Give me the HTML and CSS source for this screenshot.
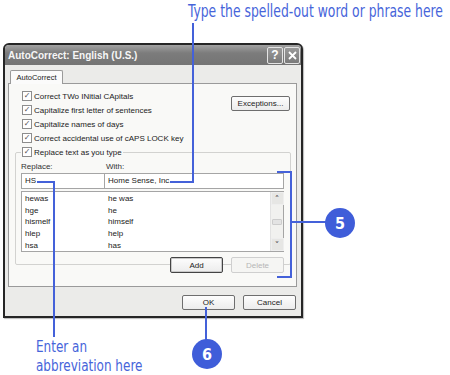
FILE: index.html
```html
<!DOCTYPE html>
<html lang="en">
<head>
  <meta charset="UTF-8" />
  <title>AutoCorrect</title>
  <link rel="stylesheet" href="styles.css">
</head>
<body>
<div class="page">
  <div class="dialog">
    <div class="titlebar">
      <span class="title">AutoCorrect: English (U.S.)</span>
      <div class="title-btns">
        <span class="tbtn">?</span>
        <span class="tbtn">
          <svg width="11" height="11" viewBox="0 0 11 11"><path d="M2 2 L9 9 M9 2 L2 9" stroke="#fff" stroke-width="1.8"/></svg>
        </span>
      </div>
    </div>

    <div class="dlg-body">
      <div class="tabs">
        <div class="tab">AutoCorrect</div>
      </div>
      <div class="panel">
        <div class="top-opts">
          <div class="checks">
            <label class="chk"><span class="box">&#10003;</span>Correct TWo INitial CApitals</label>
            <label class="chk"><span class="box">&#10003;</span>Capitalize first letter of sentences</label>
            <label class="chk"><span class="box">&#10003;</span>Capitalize names of days</label>
            <label class="chk"><span class="box">&#10003;</span>Correct accidental use of cAPS LOCK key</label>
          </div>
          <button class="btn exc">Exceptions...</button>
        </div>

        <fieldset class="group">
          <legend><label class="chk"><span class="box">&#10003;</span>Replace text as you type</label></legend>
          <div class="heads">
            <span class="h-rep">Replace:</span>
            <span>With:</span>
          </div>
          <div class="inputs">
            <div class="inp rep">HS</div>
            <div class="inp with">Home Sense, Inc.</div>
          </div>
          <div class="list">
            <div class="rows">
              <div class="row"><span class="c1">hewas</span><span>he was</span></div>
              <div class="row"><span class="c1">hge</span><span>he</span></div>
              <div class="row"><span class="c1">hismelf</span><span>himself</span></div>
              <div class="row"><span class="c1">hlep</span><span>help</span></div>
              <div class="row"><span class="c1">hsa</span><span>has</span></div>
            </div>
            <div class="scroll">
              <span class="arrow">&#708;</span>
              <span class="thumb"></span>
              <span class="arrow">&#709;</span>
            </div>
          </div>
          <div class="grp-btns">
            <button class="btn add">Add</button>
            <button class="btn dis">Delete</button>
          </div>
        </fieldset>
      </div>

      <div class="foot-btns">
        <button class="btn">OK</button>
        <button class="btn">Cancel</button>
      </div>
    </div>
  </div>

  <!-- callouts -->
  <div class="note note-top">Type the spelled-out word or phrase here</div>
  <div class="ln" style="left:192px; top:23px; width:2px; height:160px;"></div>
  <div class="ln" style="left:170px; top:181px; width:24px; height:2px;"></div>

  <div class="ln" style="left:37px; top:181px; width:18px; height:2px;"></div>
  <div class="ln" style="left:53px; top:181px; width:2px; height:156px;"></div>
  <div class="note note-abbr">Enter an<br>abbreviation here</div>

  <div class="ln" style="left:277px; top:171px; width:15px; height:2px;"></div>
  <div class="ln" style="left:290px; top:171px; width:2px; height:107px;"></div>
  <div class="ln" style="left:277px; top:276px; width:15px; height:2px;"></div>
  <div class="ln" style="left:290px; top:221px; width:36px; height:2px;"></div>
  <div class="bubble" style="left:325px; top:208px;">5</div>

  <div class="ln" style="left:205px; top:307px; width:2px; height:34px;"></div>
  <div class="bubble" style="left:192px; top:339px;">6</div>
</div>
</body>
</html>
```

FILE: styles.css
```css
body {
  margin: 0;
  background: #fff;
  font-family: 'Liberation Sans', Arial, sans-serif;
}

.page {
  position: relative;
  width: 450px;
  height: 375px;
  overflow: hidden;
}

.dialog {
  margin: 43px 0 0 3px;
  width: 296px;
  height: 271px;
  border: 2px solid #262626;
  border-radius: 6px 6px 0 0;
  background: #ebebe9;
  display: flex;
  flex-direction: column;
  box-shadow: 1px 1px 1px #bbb;
}

.titlebar {
  height: 20px;
  display: flex;
  align-items: center;
  justify-content: space-between;
  padding: 0 1px 0 3px;
  background: linear-gradient(#a2a2a2, #7c7c7c 40%, #747474);
  border-radius: 4px 4px 0 0;
}

.title {
  color: #f6f6f6;
  font-size: 10px;
  font-weight: bold;
}

.title-btns {
  display: flex;
  gap: 1px;
}

.tbtn {
  width: 14px;
  height: 15px;
  border: 1px solid #e4e4e4;
  border-radius: 2px;
  background: linear-gradient(#9a9a9a, #7a7a7a);
  color: #fff;
  font-size: 12px;
  font-weight: bold;
  display: flex;
  align-items: center;
  justify-content: center;
}

.dlg-body {
  flex: 1;
  padding: 5px 4px 0 3px;
  font-size: 8px;
  color: #222;
}

.tabs {
  display: flex;
  padding-left: 2px;
}

.tab {
  width: 51px;
  height: 13px;
  border: 1px solid #9a9a9a;
  border-bottom: none;
  border-radius: 2px 2px 0 0;
  background: #fbfbfb;
  font-size: 7.5px;
  text-align: center;
  line-height: 13px;
  margin-bottom: -1px;
  position: relative;
}

.panel {
  height: 197px;
  border: 1px solid #9a9a9a;
  background: #f9f9f7;
  padding-top: 5px;
  box-sizing: content-box;
}

.top-opts {
  display: flex;
  justify-content: space-between;
  padding: 0 6px 0 13px;
}

.chk {
  display: flex;
  align-items: center;
  gap: 2px;
  height: 14px;
  white-space: nowrap;
}

.box {
  width: 8px;
  height: 8px;
  border: 1px solid #8d8d8d;
  background: #fff;
  color: #555;
  font-size: 8px;
  line-height: 8px;
  text-align: center;
  font-family: 'DejaVu Sans', sans-serif;
}

.btn {
  font-family: 'Liberation Sans', Arial, sans-serif;
  font-size: 8px;
  color: #222;
  height: 15px;
  padding: 0;
  border: 1px solid #6e6e6e;
  border-radius: 2px;
  background: linear-gradient(#fdfdfd, #ececec);
}

.exc {
  width: 59px;
  margin-top: 7px;
}

.group {
  margin: 0 5px 0 6px;
  padding: 0 6px 3px 5px;
  border: 1px solid #d2d2d0;
  border-radius: 2px;
  height: 120px;
  box-sizing: border-box;
}

.group legend {
  padding: 0 1px;
}

.heads {
  display: flex;
  height: 10px;
  align-items: center;
  margin-top: 2px;
  color: #333;
}

.h-rep {
  width: 85px;
}

.inputs {
  display: flex;
  margin-top: 2px;
}

.inp {
  height: 14px;
  border: 1px solid #a5a5a5;
  background: #fff;
  line-height: 14px;
  padding-left: 3px;
  box-sizing: content-box;
}

.rep {
  width: 79px;
}

.with {
  flex: 1;
  border-left: none;
}

.list {
  margin-top: 2px;
  height: 59px;
  border: 1px solid #a5a5a5;
  background: #fff;
  display: flex;
}

.rows {
  flex: 1;
  padding-top: 1px;
}

.row {
  display: flex;
  height: 11.6px;
  align-items: center;
  padding-left: 3px;
}

.c1 {
  width: 83px;
}

.scroll {
  width: 12px;
  border-left: 1px solid #e2e2e2;
  background: #f1f1ef;
  display: flex;
  flex-direction: column;
  justify-content: space-between;
  align-items: center;
}

.arrow {
  width: 11px;
  height: 11px;
  background: #e6e6e4;
  border: 1px solid #eee;
  color: #666;
  font-size: 9px;
  font-weight: bold;
  text-align: center;
  line-height: 13px;
  font-family: 'DejaVu Sans', sans-serif;
}

.thumb {
  width: 8px;
  height: 4px;
  border: 1px solid #ccc;
  border-radius: 1px;
  background: #e3e3e3;
}

.grp-btns {
  display: flex;
  justify-content: flex-end;
  gap: 8px;
  margin-top: 5px;
}

.grp-btns .btn {
  width: 53px;
  height: 16px;
}

.add {
  border: 1px solid #444;
  box-shadow: inset 0 0 0 1px #c9c9c9;
}

.dis {
  color: #b6b6b6;
  border-color: #cfcfcf;
  background: #f5f5f3;
}

.foot-btns {
  display: flex;
  justify-content: flex-end;
  gap: 8px;
  margin-top: 8px;
  margin-right: 1px;
}

.foot-btns .btn {
  width: 53px;
}

/* callouts */
.ln {
  position: absolute;
  background: #4461d9;
}

.note {
  position: absolute;
  color: #4664da;
  font-family: 'DejaVu Sans Condensed', 'DejaVu Sans', sans-serif;
  font-size: 17px;
  transform: scaleX(0.81);
  transform-origin: left top;
  white-space: nowrap;
}

.note-top {
  left: 188px;
  top: 1px;
}

.note-abbr {
  left: 36px;
  top: 337px;
  font-size: 16.5px;
  line-height: 19px;
}

.bubble {
  position: absolute;
  width: 30px;
  height: 30px;
  border-radius: 50%;
  background: #3f5dd9;
  color: #fff;
  font-family: 'DejaVu Sans Condensed', 'DejaVu Sans', sans-serif;
  font-weight: bold;
  font-size: 16px;
  display: flex;
  align-items: center;
  justify-content: center;
}
```
